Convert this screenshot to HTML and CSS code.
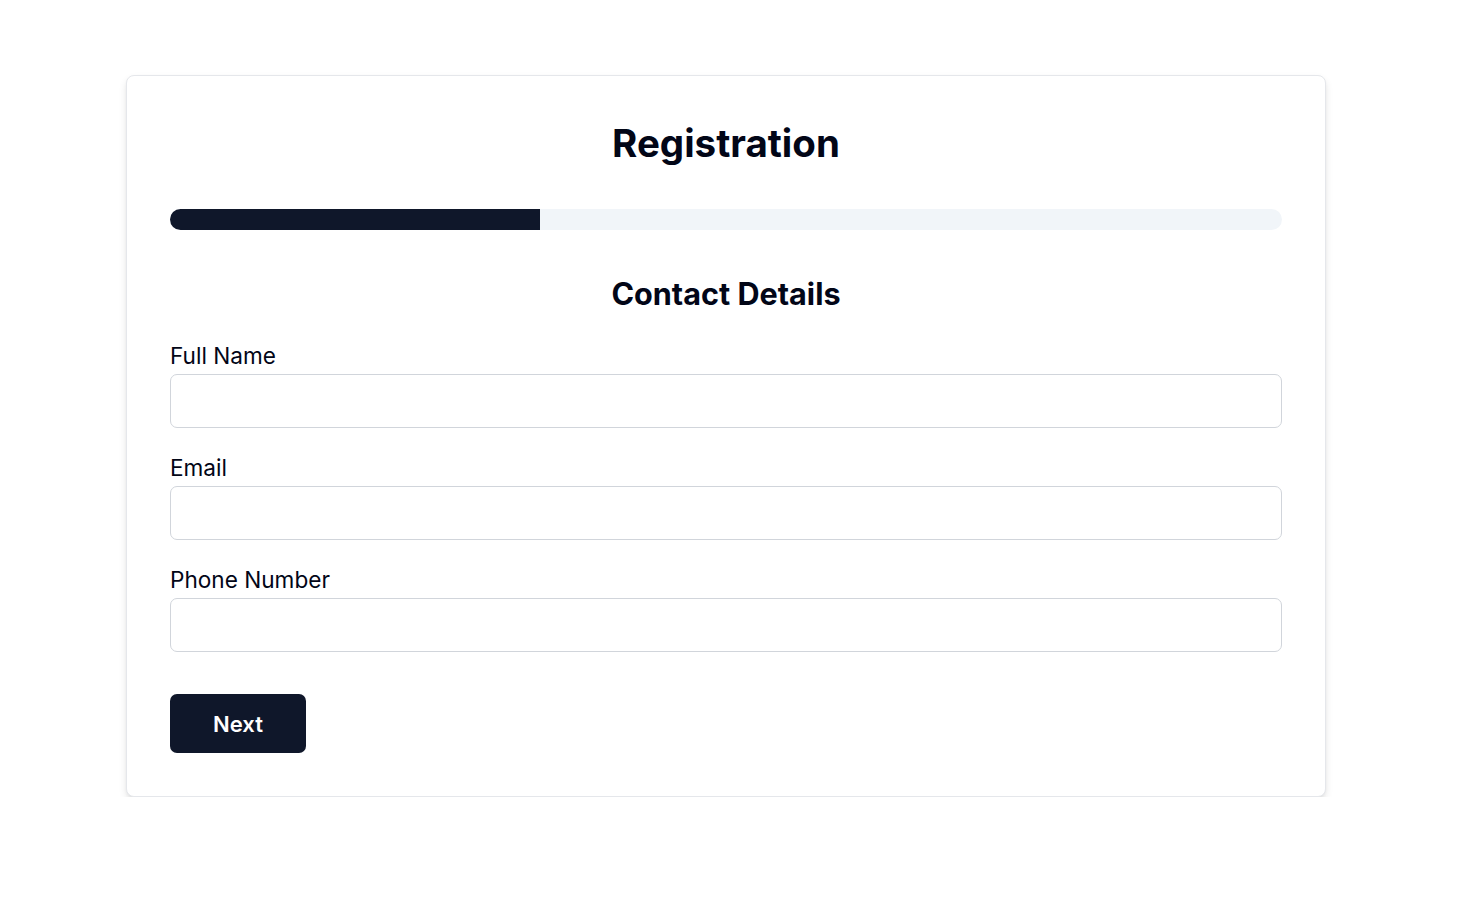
FILE: index.html
```html
<!DOCTYPE html>
<html lang="en">
<head>
<meta charset="utf-8">
<title>Registration</title>
<link rel="stylesheet" href="styles.css">
</head>
<body>
<main class="page">
  <section class="card">
    <h1 class="title">Registration</h1>
    <div class="progress"><div class="progress-fill" style="width:33.3%"></div></div>
    <h2 class="step-title">Contact Details</h2>
    <form class="form">
      <div class="field">
        <label class="label" for="name">Full Name</label>
        <input class="input" id="name" type="text">
      </div>
      <div class="field">
        <label class="label" for="email">Email</label>
        <input class="input" id="email" type="email">
      </div>
      <div class="field">
        <label class="label" for="phone">Phone Number</label>
        <input class="input" id="phone" type="tel">
      </div>
      <div class="actions">
        <button class="btn" type="button">Next</button>
      </div>
    </form>
  </section>
</main>
</body>
</html>
```
FILE: styles.css
```css
* { box-sizing: border-box; }
html, body { margin: 0; padding: 0; background: #ffffff; }
body {
  font-family: Inter, "Noto Sans", sans-serif;
  color: #020617;
}
.page {
  padding: 75px 0 0 126px;
}
.card {
  width: 1200px;
  background: #fff;
  border: 1px solid #e5e7eb;
  border-radius: 8px;
  box-shadow: 0 4px 8px -1px rgba(0,0,0,0.12), 0 2px 4px -2px rgba(0,0,0,0.1);
  padding: 43px;
}
.title {
  margin: 0;
  text-align: center;
  font-size: 38.5px;
  line-height: 48px;
  font-weight: 700;
  color: #020617;
}
.progress {
  margin-top: 42px;
  height: 21px;
  background: #f1f5f9;
  border-radius: 999px;
  overflow: hidden;
}
.progress-fill {
  height: 100%;
  background: #0f172a;
}
.step-title {
  margin: 44px 0 0;
  text-align: center;
  font-size: 30.6px;
  line-height: 40px;
  font-weight: 700;
  color: #020617;
}
.form {
  display: flex;
  flex-direction: column;
  gap: 26px;
  margin-top: 28px;
}
.field {
  display: flex;
  flex-direction: column;
  gap: 4px;
}
.label {
  font-size: 22.6px;
  line-height: 28px;
  color: #020617;
}
.input {
  height: 54px;
  border: 1px solid #d1d5db;
  border-radius: 7px;
  background: #fff;
  font-family: inherit;
  font-size: 20px;
  padding: 0 14px;
}
.actions {
  margin-top: 16px;
}
.btn {
  width: 136px;
  height: 59px;
  border: none;
  border-radius: 7px;
  background: #0f172a;
  color: #fff;
  font-family: inherit;
  font-size: 22px;
  font-weight: 600;
}
```
